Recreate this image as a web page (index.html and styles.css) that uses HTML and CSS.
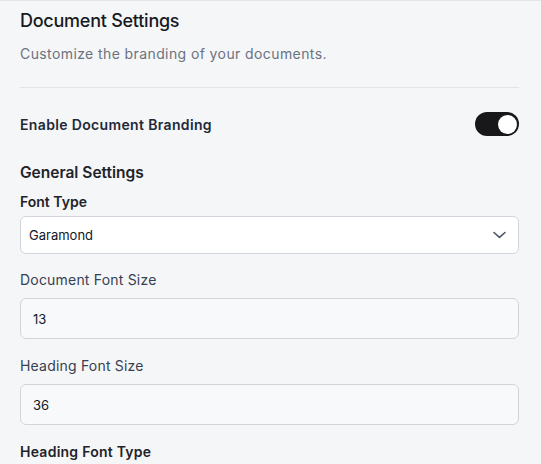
FILE: index.html
```html
<!DOCTYPE html>
<html lang="en">
<head>
<meta charset="utf-8">
<title>Document Settings</title>
<link rel="stylesheet" href="styles.css">
</head>
<body>
<main class="page">
  <h1 class="title">Document Settings</h1>
  <p class="subtitle">Customize the branding of your documents.</p>
  <hr class="divider">
  <div class="toggle-row">
    <span class="toggle-label">Enable Document Branding</span>
    <span class="switch" role="switch" aria-checked="true"><span class="knob"></span></span>
  </div>
  <h2 class="section-title">General Settings</h2>
  <div class="field first">
    <label class="label-strong">Font Type</label>
    <div class="select">
      <span class="select-value">Garamond</span>
      <svg class="chevron" width="13" height="8" viewBox="0 0 13 8" fill="none"><path d="M1 1.5 L6.5 6.3 L12 1.5" stroke="#4b5563" stroke-width="1.6" stroke-linecap="round" stroke-linejoin="round"/></svg>
    </div>
  </div>
  <div class="field">
    <label class="label">Document Font Size</label>
    <div class="input">13</div>
  </div>
  <div class="field spaced">
    <label class="label">Heading Font Size</label>
    <div class="input">36</div>
  </div>
  <div class="field spaced">
    <label class="label-strong wide">Heading Font Type</label>
  </div>
</main>
</body>
</html>
```
FILE: styles.css
```css
html, body {
  margin: 0;
  padding: 0;
}
body {
  background: #f5f6f8;
  border-top: 1px solid #e3e6eb;
  font-family: "Inter", "Noto Sans", sans-serif;
  color: #111827;
  height: 463px;
  overflow: hidden;
}
.page {
  padding: 6px 22px 0 20px;
}
.title {
  margin: 0;
  font-size: 18px;
  letter-spacing: -0.25px;
  line-height: 28px;
  font-weight: 500;
  color: #171a21;
}
.subtitle {
  margin: 9px 0 0;
  font-size: 14px;
  letter-spacing: 0.4px;
  line-height: 20px;
  color: #6b7280;
}
.divider {
  margin: 23px 0 0;
  border: 0;
  border-top: 1px solid #e1e4e9;
  height: 0;
}
.toggle-row {
  margin-top: 24px;
  display: flex;
  align-items: center;
  justify-content: space-between;
  height: 24px;
}
.toggle-label {
  font-size: 14px;
  letter-spacing: 0.35px;
  font-weight: 600;
  color: #1f2937;
}
.switch {
  width: 44px;
  height: 24px;
  border-radius: 12px;
  background: #18181b;
  display: flex;
  align-items: center;
  justify-content: flex-end;
  padding: 0 2px;
  box-sizing: border-box;
}
.knob {
  width: 19px;
  height: 19px;
  border-radius: 50%;
  background: #fff;
}
.section-title {
  margin: 25px 0 0;
  font-size: 15.5px;
  line-height: 24px;
  font-weight: 600;
  color: #1f2329;
}
.field {
  margin-top: 16px;
  display: flex;
  flex-direction: column;
}
.field.first {
  margin-top: 7px;
}
.field.spaced {
  margin-top: 17px;
}
.label-strong {
  font-size: 14px;
  line-height: 20px;
  font-weight: 600;
  color: #1f2329;
}
.label-strong.wide {
  letter-spacing: 0.25px;
}
.label {
  font-size: 14px;
  letter-spacing: 0.2px;
  line-height: 20px;
  color: #374151;
}
.select {
  margin-top: 4px;
  height: 38px;
  box-sizing: border-box;
  border: 1px solid #d1d5db;
  border-radius: 6px;
  background: #fff;
  display: flex;
  align-items: center;
  justify-content: space-between;
  padding: 0 12px 0 8px;
}
.select-value {
  font-size: 13px;
  color: #111827;
}
.input {
  margin-top: 8px;
  height: 41px;
  box-sizing: border-box;
  border: 1px solid #d1d5db;
  border-radius: 6px;
  background: #f8f9fb;
  display: flex;
  align-items: center;
  padding: 0 12px;
  font-size: 13px;
  color: #111827;
}
```
